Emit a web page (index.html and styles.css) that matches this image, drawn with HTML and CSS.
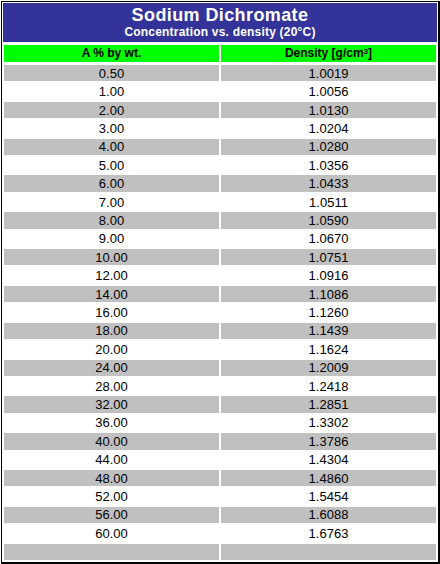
FILE: index.html
```html
<!DOCTYPE html>
<html>
<head>
<meta charset="utf-8">
<link rel="stylesheet" href="styles.css">
</head>
<body>
<div class="frame">
  <div class="title">
    <div class="title-main">Sodium Dichromate</div>
    <div class="title-sub">Concentration vs. density (20°C)</div>
  </div>
  <div class="table">
    <div class="row head"><div class="cell">A % by wt.</div><div class="cell">Density [g/cm<sup>3</sup>]</div></div>
    <div class="row alt"><div class="cell">0.50</div><div class="cell">1.0019</div></div>
    <div class="row"><div class="cell">1.00</div><div class="cell">1.0056</div></div>
    <div class="row alt"><div class="cell">2.00</div><div class="cell">1.0130</div></div>
    <div class="row"><div class="cell">3.00</div><div class="cell">1.0204</div></div>
    <div class="row alt"><div class="cell">4.00</div><div class="cell">1.0280</div></div>
    <div class="row"><div class="cell">5.00</div><div class="cell">1.0356</div></div>
    <div class="row alt"><div class="cell">6.00</div><div class="cell">1.0433</div></div>
    <div class="row"><div class="cell">7.00</div><div class="cell">1.0511</div></div>
    <div class="row alt"><div class="cell">8.00</div><div class="cell">1.0590</div></div>
    <div class="row"><div class="cell">9.00</div><div class="cell">1.0670</div></div>
    <div class="row alt"><div class="cell">10.00</div><div class="cell">1.0751</div></div>
    <div class="row"><div class="cell">12.00</div><div class="cell">1.0916</div></div>
    <div class="row alt"><div class="cell">14.00</div><div class="cell">1.1086</div></div>
    <div class="row"><div class="cell">16.00</div><div class="cell">1.1260</div></div>
    <div class="row alt"><div class="cell">18.00</div><div class="cell">1.1439</div></div>
    <div class="row"><div class="cell">20.00</div><div class="cell">1.1624</div></div>
    <div class="row alt"><div class="cell">24.00</div><div class="cell">1.2009</div></div>
    <div class="row"><div class="cell">28.00</div><div class="cell">1.2418</div></div>
    <div class="row alt"><div class="cell">32.00</div><div class="cell">1.2851</div></div>
    <div class="row"><div class="cell">36.00</div><div class="cell">1.3302</div></div>
    <div class="row alt"><div class="cell">40.00</div><div class="cell">1.3786</div></div>
    <div class="row"><div class="cell">44.00</div><div class="cell">1.4304</div></div>
    <div class="row alt"><div class="cell">48.00</div><div class="cell">1.4860</div></div>
    <div class="row"><div class="cell">52.00</div><div class="cell">1.5454</div></div>
    <div class="row alt"><div class="cell">56.00</div><div class="cell">1.6088</div></div>
    <div class="row"><div class="cell">60.00</div><div class="cell">1.6763</div></div>
    <div class="row alt"><div class="cell"></div><div class="cell"></div></div>
  </div>
</div>
</body>
</html>
```
FILE: styles.css
```css
html, body {
  margin: 0;
  padding: 0;
  background: #fff;
}
body {
  font-family: "Liberation Sans", Arial, sans-serif;
  color: #000;
}
.frame {
  margin: 1px 0 0 1px;
  width: 439px;
  height: 563px;
  box-sizing: border-box;
  border-style: solid;
  border-color: #000;
  border-width: 1px 2px 2px 1px;
  padding: 1px;
  display: flex;
  flex-direction: column;
}
.title {
  flex: 0 0 39px;
  box-sizing: border-box;
  padding-top: 2px;
  background: #333399;
  color: #fff;
  text-align: center;
  font-weight: bold;
}
.title-main {
  font-size: 18px;
  line-height: 20px;
  letter-spacing: 0.4px;
}
.title-sub {
  font-size: 12px;
  line-height: 14px;
  letter-spacing: 0.2px;
}
.table {
  flex: 1;
  margin: 3px 1px 1px;
  display: flex;
  flex-direction: column;
  gap: 2px;
}
.row {
  flex: 1 1 0;
  min-height: 0;
  display: grid;
  grid-template-columns: 1fr 1fr;
  column-gap: 2px;
}
.cell {
  display: flex;
  align-items: center;
  justify-content: center;
  font-size: 13px;
  line-height: 15px;
}
.head {
  flex: 0 0 17px;
  margin-bottom: 1px;
}
.head .cell {
  background: #00ff00;
  font-weight: bold;
  font-size: 12px;
}
.head sup {
  font-size: 8px;
  line-height: 0;
  position: relative;
  top: -2px;
}
.alt .cell {
  background: #c0c0c0;
}
```
